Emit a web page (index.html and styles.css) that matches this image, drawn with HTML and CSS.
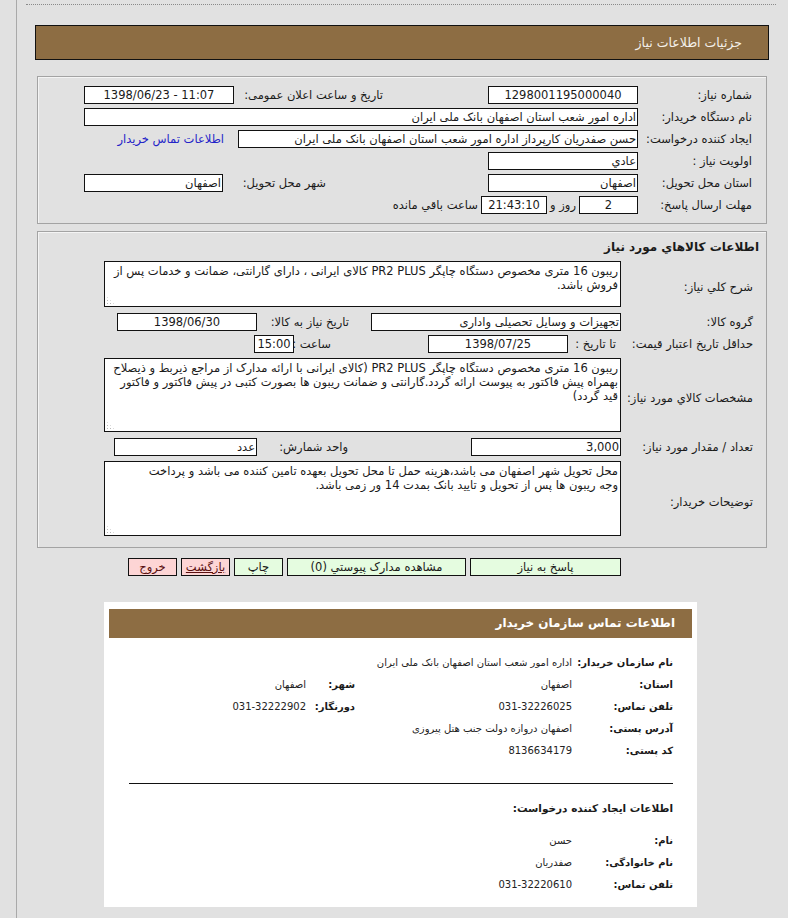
FILE: index.html
```html
<!DOCTYPE html>
<html lang="fa" dir="rtl">
<head>
<meta charset="utf-8">
<title>جزئیات اطلاعات نیاز</title>
<link rel="stylesheet" href="styles.css">
</head>
<body>
<div class="page">
  <div class="main">
    <div class="dots"></div>
    <div class="title-bar">جزئیات اطلاعات نیاز</div>

    <div class="section s1">
      <div class="row">
        <div class="lbl">شماره نیاز:</div>
        <div class="box w150 c">1298001195000040</div>
        <div class="lbl2 pub">تاریخ و ساعت اعلان عمومی:</div>
        <div class="box w150 c ltr">1398/06/23 - 11:07</div>
      </div>
      <div class="row">
        <div class="lbl">نام دستگاه خریدار:</div>
        <div class="box w554">اداره امور شعب استان اصفهان بانک ملی ایران</div>
      </div>
      <div class="row">
        <div class="lbl">ایجاد کننده درخواست:</div>
        <div class="box w400">حسن صفدریان کارپرداز اداره امور شعب استان اصفهان بانک ملی ایران</div>
        <a class="link" href="#">اطلاعات تماس خریدار</a>
      </div>
      <div class="row">
        <div class="lbl">اولویت نیاز :</div>
        <div class="box w150">عادي</div>
      </div>
      <div class="row">
        <div class="lbl">استان محل تحویل:</div>
        <div class="box w150">اصفهان</div>
        <div class="lbl2 city">شهر محل تحویل:</div>
        <div class="box w139">اصفهان</div>
      </div>
      <div class="row">
        <div class="lbl">مهلت ارسال پاسخ:</div>
        <div class="box w59 c">2</div>
        <div class="mid">روز و</div>
        <div class="box w66 c">21:43:10</div>
        <div class="after">ساعت باقي مانده</div>
      </div>
    </div>

    <div class="section s2">
      <div class="sec-title">اطلاعات کالاهاي مورد نیاز</div>
      <div class="row2 area-row">
        <div class="lbl2col">شرح کلي نیاز:</div>
        <div class="area h46">ریبون 16 متری مخصوص دستگاه چاپگر PR2 PLUS کالای ایرانی ، دارای گارانتی، ضمانت و خدمات پس از فروش باشد.</div>
      </div>
      <div class="row2 g6">
        <div class="lbl2col">گروه کالا:</div>
        <div class="box w250">تجهیزات و وسایل تحصیلی واداری</div>
        <div class="lbl2 need">تاریخ نیاز به کالا:</div>
        <div class="box w140 c">1398/06/30</div>
      </div>
      <div class="row2 g4">
        <div class="lbl2col">حداقل تاریخ اعتبار قیمت:</div>
        <div class="lbl2 until">تا تاریخ :</div>
        <div class="box w140 c">1398/07/25</div>
        <div class="lbl2 hour">ساعت :</div>
        <div class="box w40 c">15:00</div>
      </div>
      <div class="row2 area-row g5">
        <div class="lbl2col">مشخصات کالاي مورد نیاز:</div>
        <div class="area h74">ریبون 16 متری مخصوص دستگاه چاپگر PR2 PLUS (کالای ایرانی با ارائه مدارک از مراجع ذیربط و ذیصلاح بهمراه پیش فاکتور به پیوست ارائه گردد.گارانتی و ضمانت ریبون ها بصورت کتبی در پیش فاکتور و فاکتور قید گردد)</div>
      </div>
      <div class="row2 g6">
        <div class="lbl2col">تعداد / مقدار مورد نیاز:</div>
        <div class="box w150">3,000</div>
        <div class="lbl2 unit">واحد شمارش:</div>
        <div class="box w143">عدد</div>
      </div>
      <div class="row2 area-row g5">
        <div class="lbl2col">توضیحات خریدار:</div>
        <div class="area h75">محل تحویل شهر اصفهان می باشد،هزینه حمل تا محل تحویل بعهده تامین کننده می باشد و پرداخت<br>وجه ریبون ها پس از تحویل و تایید بانک بمدت 14 ور زمی باشد.</div>
      </div>
    </div>

    <div class="buttons">
      <button class="btn green w151">پاسخ به نیاز</button>
      <button class="btn green w179">مشاهده مدارک پیوستي (0)</button>
      <button class="btn green w49">چاپ</button>
      <button class="btn pink w49 under">بازگشت</button>
      <button class="btn pink w49">خروج</button>
    </div>

    <div class="card">
      <div class="card-head">اطلاعات تماس سازمان خریدار</div>
      <div class="crow first">
        <div class="clbl">نام سازمان خریدار:</div>
        <div class="cval">اداره امور شعب استان اصفهان بانک ملی ایران</div>
      </div>
      <div class="crow">
        <div class="clbl">استان:</div>
        <div class="cval w217">اصفهان</div>
        <div class="clbl w49">شهر:</div>
        <div class="cval">اصفهان</div>
      </div>
      <div class="crow">
        <div class="clbl">تلفن تماس:</div>
        <div class="cval w217">031-32226025</div>
        <div class="clbl w49">دورنگار:</div>
        <div class="cval">031-32222902</div>
      </div>
      <div class="crow">
        <div class="clbl">آدرس پستی:</div>
        <div class="cval">اصفهان دروازه دولت جنب هتل پیروزی</div>
      </div>
      <div class="crow">
        <div class="clbl">کد پستی:</div>
        <div class="cval">8136634179</div>
      </div>
      <div class="cline"></div>
      <div class="csub">اطلاعات ایجاد کننده درخواست:</div>
      <div class="crow sub-first">
        <div class="clbl">نام:</div>
        <div class="cval">حسن</div>
      </div>
      <div class="crow">
        <div class="clbl">نام خانوادگی:</div>
        <div class="cval">صفدریان</div>
      </div>
      <div class="crow">
        <div class="clbl">تلفن تماس:</div>
        <div class="cval">031-32220610</div>
      </div>
    </div>
  </div>
</div>
</body>
</html>
```

FILE: styles.css
```css
* { box-sizing: border-box; }
html, body { margin: 0; padding: 0; background: #ffffff; }
body {
  font-family: Tahoma, "DejaVu Sans", sans-serif;
  font-size: 11.5px;
  color: #1a1a1a;
}
.page {
  background: #e1e1e1;
  height: 918px;
  width: 788px;
  padding-left: 16px;
  direction: ltr;
}
.main {
  direction: ltr;
  border-left: 1px solid #a9a9a9;
  height: 918px;
  padding-left: 18px;
  padding-top: 4px;
}
.main > * { direction: rtl; }
.dots {
  margin-left: -9px;
  width: 750px;
  border-top: 1px dotted #8a8a8a;
  height: 0;
}
.title-bar {
  margin-top: 20px;
  width: 734px;
  height: 35px;
  background: #8d6d43;
  border: 1px solid #111;
  color: #f4f0ea;
  font-size: 12.5px;
  line-height: 33px;
  padding-right: 26px;
}
.section {
  margin-left: 2px;
  width: 730px;
  border: 1px solid #a3a3a3;
  box-shadow: inset 1px 1px 0 #f4f4f4;
}
.s1 { margin-top: 16px; padding: 9px 0 9px; }
.s2 { margin-top: 7px; padding: 7px 0 11px; }

.row { display: flex; align-items: center; height: 18px; }
.row + .row { margin-top: 4px; }
.lbl { width: 128px; padding-right: 14px; white-space: nowrap; flex: none; }
.box {
  height: 18px;
  border: 1px solid #111;
  background: #fff;
  line-height: 16px;
  padding: 0 1px;
  white-space: nowrap;
  overflow: hidden;
  flex: none;
}
.c { text-align: center; }
.ltr { direction: ltr; }
.w150 { width: 150px; }
.w554 { width: 554px; }
.w400 { width: 400px; }
.w139 { width: 139px; }
.w59 { width: 59px; }
.w66 { width: 66px; }
.w250 { width: 250px; }
.w140 { width: 140px; }
.w40 { width: 40px; }
.w143 { width: 143px; }
.lbl2 { flex: none; white-space: nowrap; }
.pub { width: 254px; padding-right: 105px; }
.city { width: 265px; padding-right: 162px; }
.link { color: #2323c8; text-decoration: none; margin-right: 14px; white-space: nowrap; }
.mid { width: 32px; text-align: center; flex: none; }
.after { margin-right: 3px; white-space: nowrap; }

.sec-title {
  font-weight: bold;
  font-size: 12px;
  height: 16px;
  line-height: 16px;
  padding-right: 7px;
}
.row2 { display: flex; align-items: center; height: 18px; }
.area-row { height: auto; margin-top: 6px; }
.g4 { margin-top: 4px; }
.g5 { margin-top: 5px; }
.g6 { margin-top: 6px; }
.lbl2col { width: 145px; padding-right: 13px; white-space: nowrap; flex: none; }
.area-row .lbl2col { padding-top: 6px; }
.area {
  position: relative;
  width: 517px;
  border: 1px solid #111;
  background: #fff;
  padding: 2px 2px;
  line-height: 14px;
  flex: none;
  overflow: hidden;
}
.area::after {
  content: "";
  position: absolute;
  left: 1px;
  bottom: 1px;
  width: 9px;
  height: 9px;
  background-image: radial-gradient(circle, #b8b8b8 0.7px, transparent 1px);
  background-size: 3px 3px;
  clip-path: polygon(0 0, 100% 100%, 0 100%);
}
.h46 { height: 46px; }
.h74 { height: 74px; }
.h75 { height: 75px; }
.need { width: 114px; padding-right: 22px; }
.until { width: 53px; padding-right: 5px; }
.hour { width: 134px; padding-right: 97px; }
.unit { width: 214px; padding-right: 123px; }

.buttons {
  display: flex;
  gap: 4px;
  margin-top: 10px;
  margin-left: 2px;
  width: 730px;
  padding-right: 146px;
}
.btn {
  font-family: Tahoma, "DejaVu Sans", sans-serif;
  font-size: 11.5px;
  height: 18px;
  line-height: 16px;
  border: 1px solid #111;
  padding: 0;
  margin: 0;
  color: #1a1a1a;
  flex: none;
}
.green { background: #e5fce0; }
.pink { background: #fdd5d5; color: #5a1010; }
.under { text-decoration: underline; }
.w151 { width: 151px; }
.w179 { width: 179px; }
.w49 { width: 49px; }

.card {
  margin-top: 26px;
  margin-left: 69px;
  width: 593px;
  height: 305px;
  background: #fff;
  padding: 7px 5px 0;
}
.card-head {
  height: 29px;
  background: #8d6d43;
  color: #fff;
  font-weight: bold;
  font-size: 12px;
  line-height: 29px;
  padding-right: 17px;
}
.crow {
  display: flex;
  height: 22px;
  line-height: 22px;
  padding-right: 19px;
  white-space: nowrap;
}
.crow.first { margin-top: 14px; }
.crow.sub-first { margin-top: 11px; }
.clbl { width: 101px; font-weight: bold; font-size: 10px; flex: none; }
.clbl.w49 { width: 49px; }
.cval { font-size: 10px; color: #222; }
.cval.w217 { width: 217px; flex: none; }
.cline {
  margin: 21px 19px 0 20px;
  border-top: 1px solid #111;
}
.csub {
  margin-top: 13px;
  height: 22px;
  line-height: 22px;
  font-weight: bold;
  font-size: 10.5px;
  padding-right: 19px;
}
```
